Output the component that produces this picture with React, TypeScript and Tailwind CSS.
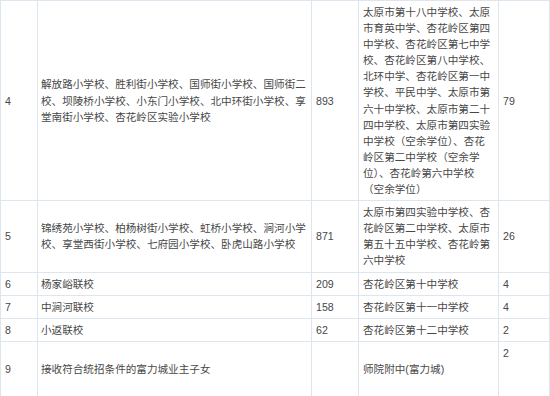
const rows: { no: string; primary: string; count: string; middle: React.ReactNode; seats: React.ReactNode }[] = [
  {
    no: "4",
    primary:
      "解放路小学校、胜利街小学校、国师街小学校、国师街二校、坝陵桥小学校、小东门小学校、北中环街小学校、享堂南街小学校、杏花岭区实验小学校",
    count: "893",
    middle:
      "太原市第十八中学校、太原市育英中学、杏花岭区第四中学校、杏花岭区第七中学校、杏花岭区第八中学校、北环中学、杏花岭区第一中学校、平民中学、太原市第六十中学校、太原市第二十四中学校、太原市第四实验中学校（空余学位）、杏花岭区第二中学校（空余学位）、杏花岭第六中学校（空余学位）",
    seats: "79",
  },
  {
    no: "5",
    primary:
      "锦绣苑小学校、柏杨树街小学校、虹桥小学校、涧河小学校、享堂西街小学校、七府园小学校、卧虎山路小学校",
    count: "871",
    middle: "太原市第四实验中学校、杏花岭区第二中学校、太原市第五十五中学校、杏花岭第六中学校",
    seats: "26",
  },
  { no: "6", primary: "杨家峪联校", count: "209", middle: "杏花岭区第十中学校", seats: "4" },
  { no: "7", primary: "中涧河联校", count: "158", middle: "杏花岭区第十一中学校", seats: "4" },
  { no: "8", primary: "小返联校", count: "62", middle: "杏花岭区第十二中学校", seats: "2" },
  {
    no: "9",
    primary: "接收符合统招条件的富力城业主子女",
    count: "",
    middle: "师院附中(富力城)",
    seats: (
      <>
        2
        <br />
        &nbsp;
        <br />
        &nbsp;
      </>
    ),
  },
];

const cell = "border border-[#dde6ef] px-[4px] py-[3px] align-middle";

export default function App() {
  return (
    <div
      className="w-[550px] h-[396px] overflow-hidden bg-white text-[#474747] text-[10.6px] leading-[16.1px]"
      style={{ fontFamily: '"Liberation Sans", "Noto Sans CJK SC", sans-serif' }}
    >
      <table className="table-fixed border-collapse w-[549px]">
        <colgroup>
          <col className="w-[37px]" />
          <col className="w-[274px]" />
          <col className="w-[47px]" />
          <col className="w-[140px]" />
          <col className="w-[51px]" />
        </colgroup>
        <tbody>
          {rows.map((r) => (
            <tr key={r.no}>
              <td className={cell}>{r.no}</td>
              <td className={`${cell} pl-[3px] pr-[1px]`}>{r.primary}</td>
              <td className={cell}>{r.count}</td>
              <td className={cell}>{r.middle}</td>
              <td className={cell}>{r.seats}</td>
            </tr>
          ))}
        </tbody>
      </table>
    </div>
  );
}
